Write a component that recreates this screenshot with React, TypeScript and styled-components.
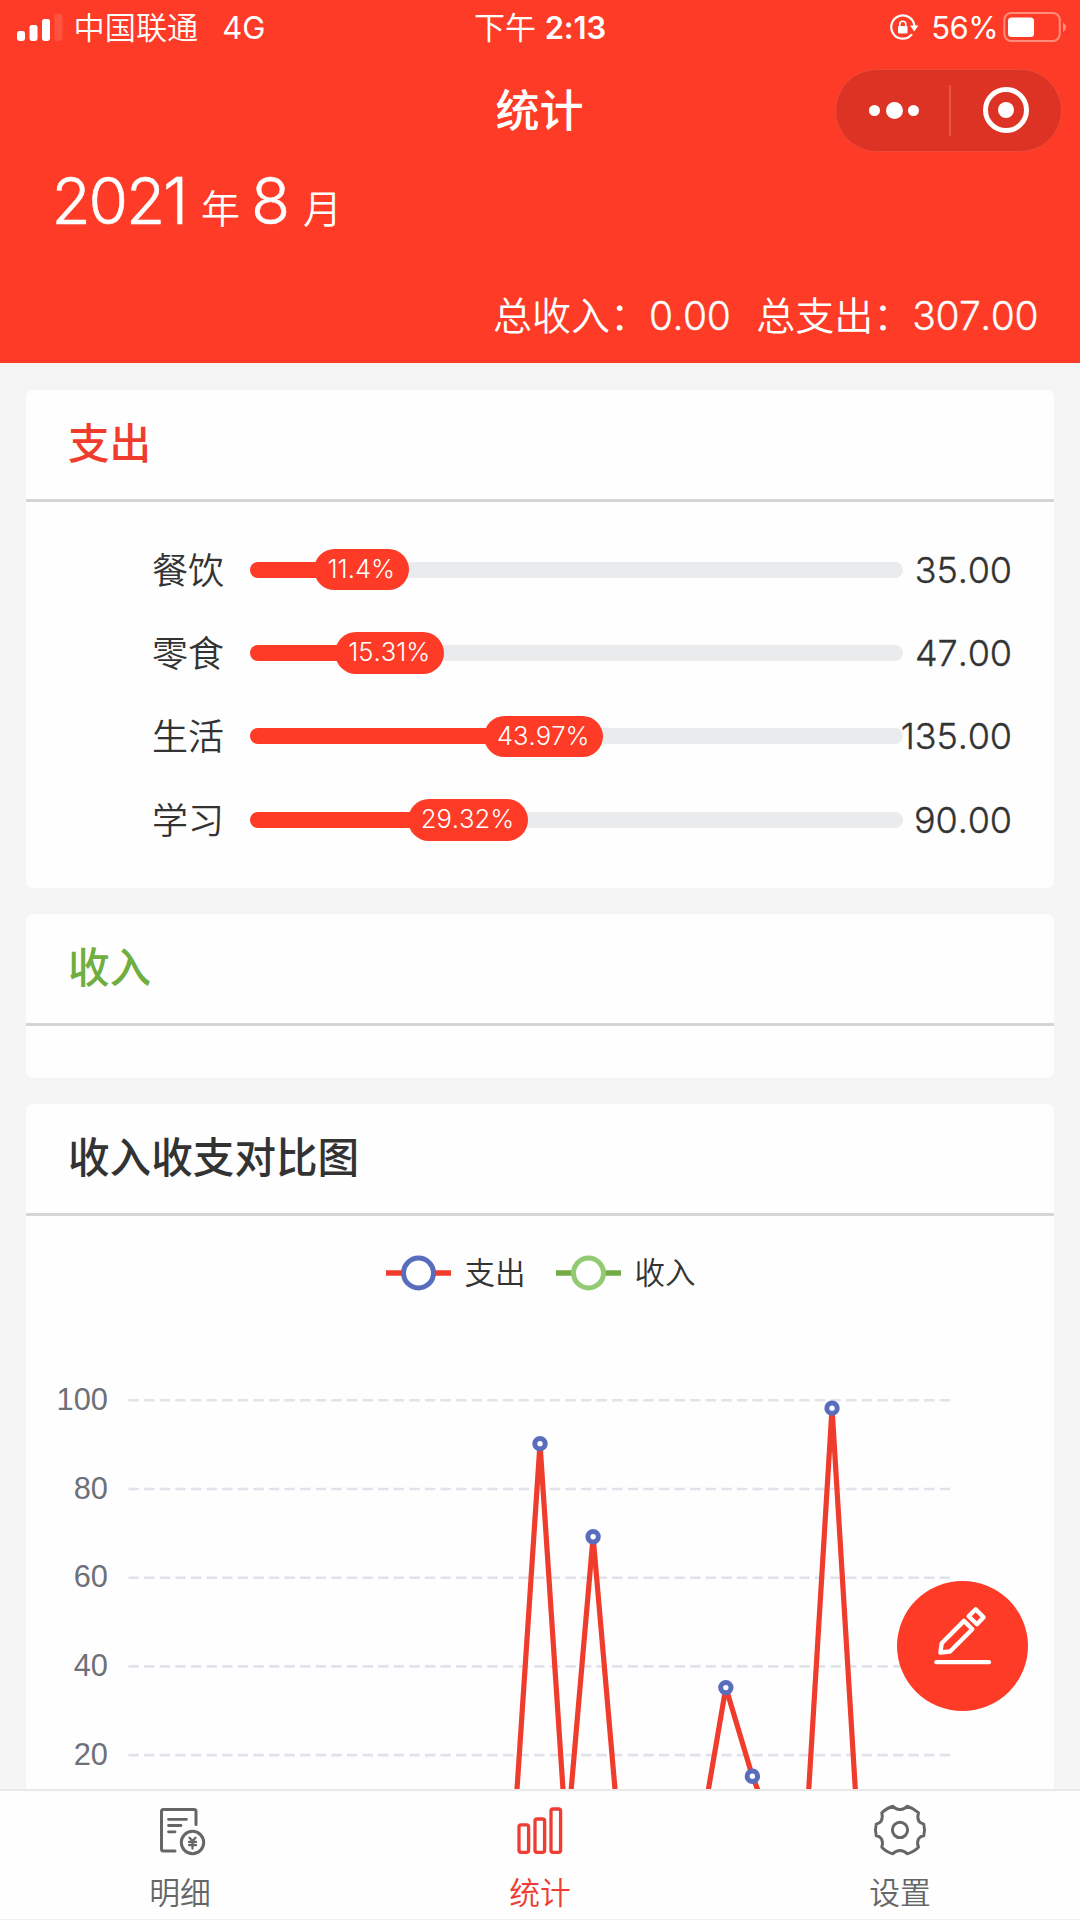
import React from "react";
import styled, { createGlobalStyle } from "styled-components";

const RED = "#fd3b26";

const GlobalStyle = createGlobalStyle`
  * { box-sizing: border-box; }
  body {
    margin: 0;
    background: #f5f5f6;
    font-family: Inter, "Noto Sans CJK SC", sans-serif;
    font-weight: 350;
  }
`;

const Screen = styled.div`
  position: relative;
  width: 1080px;
  height: 1920px;
  display: flex;
  flex-direction: column;
  overflow: hidden;
  background: #f5f5f6;
`;

const Header = styled.header`
  flex: none;
  height: 363px;
  background: ${RED};
  color: #fff;
  display: flex;
  flex-direction: column;
`;

const StatusBar = styled.div`
  height: 56px;
  display: grid;
  grid-template-columns: 1fr auto 1fr;
  align-items: center;
  padding: 0 14px 0 17px;
  font-size: 31px;
  line-height: 56px;
`;

const StatusGroup = styled.div<{ $end?: boolean }>`
  display: flex;
  align-items: center;
  justify-content: ${(p) => (p.$end ? "flex-end" : "flex-start")};
  height: 56px;
`;

const Carrier = styled.span`
  margin-left: 10.5px;
  font-size: 31.2px;
`;

const Network = styled.span`
  margin-left: 24px;
  font-weight: 400;
`;

const Clock = styled.div`
  font-weight: 400;
  font-size: 31px;
  white-space: pre;
  padding-right: 3px;
  b {
    font-weight: 600;
    letter-spacing: -0.2px;
  }
`;

const Percent = styled.span`
  margin: 0 5px 0 12px;
  font-weight: 400;
  letter-spacing: -0.6px;
`;

const NavBar = styled.div`
  height: 108px;
  display: grid;
  grid-template-columns: 1fr auto 1fr;
  align-items: center;
  padding: 0 18px;
`;

const NavTitle = styled.h1`
  margin: 0;
  grid-column: 2;
  padding: 2px 1px 0 0;
  font-size: 44px;
  line-height: 60px;
  font-weight: 500;
`;

const Capsule = styled.div`
  justify-self: end;
  width: 227px;
  height: 83px;
  border-radius: 42px;
  background: #dc3324;
  border: 1.5px solid #ee4b3a;
  display: flex;
  align-items: center;
`;

const CapsuleHalf = styled.div<{ $shift?: number }>`
  flex: 1;
  display: flex;
  align-items: center;
  justify-content: center;
  gap: 5.5px;
  padding-left: ${(p) => p.$shift ?? 0}px;
`;

const CapsuleDivider = styled.div`
  width: 1.5px;
  height: 51px;
  background: #e85548;
`;

const Dot = styled.i<{ $size: number }>`
  flex: none;
  width: ${(p) => p.$size}px;
  height: ${(p) => p.$size}px;
  border-radius: 50%;
  background: #fff;
`;

const Target = styled.div`
  width: 46px;
  height: 46px;
  border: 5.5px solid #fff;
  border-radius: 50%;
  display: flex;
  align-items: center;
  justify-content: center;
`;

const MonthPicker = styled.div`
  height: 85px;
  padding-left: 51.5px;
  display: flex;
  align-items: baseline;
  line-height: 74px;
`;

const BigNumber = styled.span<{ $gap?: number }>`
  font-size: 64px;
  font-weight: 300;
  letter-spacing: -2.2px;
  -webkit-text-stroke: 0.5px #fff;
  margin-left: ${(p) => p.$gap ?? 0}px;
`;

const Unit = styled.span<{ $gap: number }>`
  font-size: 39px;
  margin-left: ${(p) => p.$gap}px;
  position: relative;
  top: -1px;
`;

const Totals = styled.div`
  display: flex;
  justify-content: flex-end;
  margin-top: 37px;
  padding-right: 42px;
  font-size: 39px;
  line-height: 60px;
`;

const Total = styled.div`
  display: flex;
  & + & {
    margin-left: 26px;
  }
`;

const TotalValue = styled.span`
  font-weight: 300;
  font-kerning: none;
  letter-spacing: -0.5px;
  -webkit-text-stroke: 0.3px #fff;
`;

const Content = styled.main`
  flex: 1;
  min-height: 0;
  overflow: hidden;
  padding: 27px 26px 0;
  display: flex;
  flex-direction: column;
  gap: 26px;
`;

const Card = styled.section<{ $h: number }>`
  flex: none;
  height: ${(p) => p.$h}px;
  background: #fefefe;
  border-radius: 7px;
  overflow: hidden;
`;

const CardTitle = styled.h2<{ $color: string }>`
  margin: 0;
  height: 112px;
  padding-left: 42px;
  border-bottom: 3px solid #d5d5d5;
  font-size: 41.6px;
  line-height: 108px;
  font-weight: 500;
  color: ${(p) => p.$color};
`;

const Rows = styled.div`
  padding: 26px 42px 0 0;
`;

const Row = styled.div`
  height: 83.4px;
  display: grid;
  grid-template-columns: 199px 653px 1fr;
  align-items: center;
  color: #333;
`;

const RowLabel = styled.div`
  text-align: right;
  padding: 2px 1px 0 0;
  font-size: 36px;
  line-height: 50px;
`;

const Bar = styled.div`
  margin-left: 25px;
  height: 16px;
  width: 653px;
  border-radius: 8px;
  background: #e9ebed;
  display: flex;
  align-items: center;
`;

const BarFill = styled.div`
  height: 16px;
  margin-right: -20px;
  border-radius: 8px;
  background: ${RED};
`;

const Badge = styled.div`
  flex: none;
  height: 41.5px;
  border-radius: 21px;
  background: ${RED};
  color: #fff;
  font-size: 25.6px;
  line-height: 40px;
  font-weight: 300;
  font-kerning: none;
  text-align: center;
`;

const RowValue = styled.div`
  justify-self: end;
  white-space: nowrap;
  font-size: 36px;
  line-height: 50px;
  font-weight: 300;
  font-kerning: none;
  letter-spacing: -0.1px;
  -webkit-text-stroke: 0.35px #333;
  margin-left: -20px;
`;

const Legend = styled.div`
  height: 113px;
  display: flex;
  justify-content: center;
  align-items: center;
  gap: 30px;
  padding-left: 1px;
`;

const LegendItem = styled.div`
  display: flex;
  align-items: center;
  gap: 14px;
  font-size: 30.5px;
  line-height: 40px;
  color: #333;
`;

const ChartSvg = styled.svg`
  display: block;
`;

const AxisLabel = styled.text`
  font-family: "Liberation Sans", Arial, sans-serif;
  font-size: 30.8px;
  font-weight: 400;
  fill: #6e7079;
  text-anchor: end;
`;

const TabBar = styled.nav`
  flex: none;
  height: 131px;
  background: #fefefe;
  border-top: 2px solid #e9e9e9;
  border-bottom: 1.5px solid #efefef;
  display: grid;
  grid-template-columns: repeat(3, 360px);
`;

const Tab = styled.div<{ $active?: boolean }>`
  display: flex;
  flex-direction: column;
  align-items: center;
  color: ${(p) => (p.$active ? "#ee3d32" : "#666")};
  font-size: 30.8px;
  line-height: 44px;
  padding-top: 11px;
  svg {
    display: block;
    margin-bottom: 15px;
  }
`;

const Fab = styled.button`
  position: absolute;
  left: 897px;
  top: 1581px;
  width: 131px;
  height: 130px;
  padding: 0;
  border: 0;
  border-radius: 50%;
  background: ${RED};
`;

const SignalIcon = () => (
  <svg width="46" height="30" viewBox="0 0 46 30" fill="#fff">
    <rect x="0" y="18" width="8" height="10" rx="2.4" />
    <rect x="12.5" y="12" width="8" height="16" rx="2.4" />
    <rect x="25" y="6" width="8" height="22" rx="2.4" />
    <rect x="37.5" y="1" width="8" height="27" rx="2.4" opacity=".13" />
  </svg>
);

const LockIcon = () => (
  <svg width="30" height="30" viewBox="0 0 30 30" fill="none" stroke="#fff" strokeWidth="2.2">
    <path d="M22.5 21.8A11.6 11.6 0 1 1 25.4 13" strokeLinecap="round" />
    <path d="M21 12.5h8.4l-4.2 6z" fill="#fff" stroke="none" />
    <rect x="9" y="13" width="9.5" height="7.6" rx="1" fill="#fff" stroke="none" />
    <path d="M10.8 13.5v-2.3a3 3 0 0 1 6 0v2.3" strokeWidth="1.6" />
  </svg>
);

const BatteryIcon = () => (
  <svg width="63" height="32" viewBox="0 0 63 32">
    <rect x="1.3" y="1" width="55.5" height="28" rx="7" fill="none" stroke="#ff8d7c" strokeWidth="2" />
    <rect x="5" y="5.5" width="26" height="19.5" rx="3.5" fill="#fff" />
    <path d="M60 10.500v9.500q3-1.800 3-4.750t-3-4.750z" fill="#ff8d7c" />
  </svg>
);

const BillIcon = () => (
  <svg width="54" height="54" viewBox="0 0 54 54" fill="none" stroke="#666" strokeWidth="3" strokeLinecap="round">
    <path d="M22 49H10.500Q8.500 49 8.500 47V9.500Q8.500 7.500 10.500 7.500H41Q43 7.500 43 9.500V22.500" />
    <path d="M15.500 17.300H33.500M15.500 23.500H28M15.500 29.800H22" strokeWidth="2.800" />
    <circle cx="39.500" cy="40.500" r="11.200" />
    <path d="M36.500 35.800l3 3.200l3-3.200M39.500 39.500v7M36 40h7M36 43.200h7" strokeWidth="2.300" />
  </svg>
);

const BarsIcon = () => (
  <svg width="54" height="54" viewBox="0 0 54 54" fill="none" stroke="#ee3d32" strokeWidth="3.300">
    <rect x="6" y="22.800" width="9.600" height="27.500" rx="2" />
    <rect x="22" y="17" width="9.600" height="33.300" rx="2" />
    <rect x="38" y="7" width="9.600" height="43.300" rx="2" />
  </svg>
);

const GearIcon = () => (
  <svg width="54" height="54" viewBox="7 4 166 166" fill="none" stroke="#666" strokeWidth="9" strokeLinejoin="round">
    <path d="M68 17Q78 28 90 27Q102 28 112 17Q132 23 147 37Q142 52 148 63Q154 70 163 72Q168 90 163 108Q153 109 147 117Q141 130 147 143Q132 158 112 163Q102 153 90 153Q78 153 68 163Q48 158 34 143Q39 130 33 117Q27 109 17 108Q12 90 17 72Q27 70 32 63Q38 52 34 37Q48 23 68 17Z" />
    <circle cx="90" cy="90" r="23.500" />
  </svg>
);

const PencilIcon = () => (
  <svg width="131" height="130" viewBox="22 16 391 391" fill="none" stroke="#fff" strokeWidth="13" strokeLinejoin="round">
    <path d="M151 231L155 203L222 136L247 161L180 228Z" />
    <path d="M236 122L257 101L281 125L261 146Z" />
    <path d="M139 260H297" strokeLinecap="round" />
  </svg>
);

const LegendMark = ({ line, ring }: { line: string; ring: string }) => (
  <svg width="65" height="40" viewBox="0 0 65 40">
    <path d="M0 20H65" stroke={line} strokeWidth="5.400" />
    <circle cx="32.500" cy="20" r="15" fill="#fff" stroke={ring} strokeWidth="5" />
  </svg>
);

const expenses = [
  { name: "餐饮", percent: "11.4%", value: "35.00", fill: 84, badge: 94.5 },
  { name: "零食", percent: "15.31%", value: "47.00", fill: 104.5, badge: 109.5 },
  { name: "生活", percent: "43.97%", value: "135.00", fill: 253.500, badge: 119.5 },
  { name: "学习", percent: "29.32%", value: "90.00", fill: 177.500, badge: 120 },
];

const daily: Record<number, number> = { 16: 90, 18: 69, 23: 35, 24: 15, 27: 98 };

const plot = { left: 102.5, right: 925.5, top: 71.3, step: 88.7 };
const dayX = (day: number) => plot.left + ((plot.right - plot.left) / 31) * (day - 0.5);
const valueY = (v: number) => plot.top - 1 + ((100 - v) / 20) * plot.step;

const Chart = () => {
  const days = Array.from({ length: 31 }, (_, i) => i + 1);
  const points = days.map((d) => `${dayX(d)},${valueY(daily[d] ?? 0)}`).join(" ");
  return (
    <ChartSvg width="1028" height="560" viewBox="0 0 1028 560">
      {[100, 80, 60, 40, 20].map((v, i) => {
        const y = plot.top + i * plot.step;
        return (
          <g key={v}>
            <AxisLabel x="82" y={y + 9.7}>{v}</AxisLabel>
            <line x1={plot.left} x2={plot.right} y1={y} y2={y} stroke="#e2e2ea" strokeWidth="2.600" strokeDasharray="10.400 5.200" />
          </g>
        );
      })}
      <polyline points={points} fill="none" stroke="#f03c2c" strokeWidth="5.200" strokeLinejoin="bevel" />
      {Object.entries(daily).map(([d, v]) => (
        <circle key={d} cx={dayX(Number(d))} cy={valueY(v)} r="5.200" fill="#fff" stroke="#5a6dbd" strokeWidth="5" />
      ))}
    </ChartSvg>
  );
};

export default function App() {
  return (
    <Screen>
      <GlobalStyle />
      <Header>
        <StatusBar>
          <StatusGroup>
            <SignalIcon />
            <Carrier>中国联通</Carrier>
            <Network>4G</Network>
          </StatusGroup>
          <Clock>下午 <b>2:13</b></Clock>
          <StatusGroup $end>
            <LockIcon />
            <Percent>56%</Percent>
            <BatteryIcon />
          </StatusGroup>
        </StatusBar>
        <NavBar>
          <NavTitle>统计</NavTitle>
          <Capsule>
            <CapsuleHalf $shift={3}>
              <Dot $size={11} />
              <Dot $size={17} />
              <Dot $size={11} />
            </CapsuleHalf>
            <CapsuleDivider />
            <CapsuleHalf>
              <Target>
                <Dot $size={16} />
              </Target>
            </CapsuleHalf>
          </Capsule>
        </NavBar>
        <MonthPicker>
          <BigNumber>2021</BigNumber>
          <Unit $gap={15}>年</Unit>
          <BigNumber $gap={11}>8</BigNumber>
          <Unit $gap={15}>月</Unit>
        </MonthPicker>
        <Totals>
          <Total>
            <span>总收入：</span>
            <TotalValue>0.00</TotalValue>
          </Total>
          <Total>
            <span>总支出：</span>
            <TotalValue>307.00</TotalValue>
          </Total>
        </Totals>
      </Header>
      <Content>
        <Card $h={498}>
          <CardTitle $color="#f03c2c">支出</CardTitle>
          <Rows>
            {expenses.map((e) => (
              <Row key={e.name}>
                <RowLabel>{e.name}</RowLabel>
                <Bar>
                  <BarFill style={{ width: e.fill }} />
                  <Badge style={{ width: e.badge }}>{e.percent}</Badge>
                </Bar>
                <RowValue>{e.value}</RowValue>
              </Row>
            ))}
          </Rows>
        </Card>
        <Card $h={164}>
          <CardTitle $color="#6fae3f">收入</CardTitle>
        </Card>
        <Card $h={760}>
          <CardTitle $color="#333">收入收支对比图</CardTitle>
          <Legend>
            <LegendItem>
              <LegendMark line="#f03c2c" ring="#5a6dbd" />
              支出
            </LegendItem>
            <LegendItem>
              <LegendMark line="#73ab45" ring="#92cb74" />
              收入
            </LegendItem>
          </Legend>
          <Chart />
        </Card>
      </Content>
      <TabBar>
        <Tab>
          <BillIcon />
          明细
        </Tab>
        <Tab $active>
          <BarsIcon />
          统计
        </Tab>
        <Tab>
          <GearIcon />
          设置
        </Tab>
      </TabBar>
      <Fab aria-label="记一笔">
        <PencilIcon />
      </Fab>
    </Screen>
  );
}
